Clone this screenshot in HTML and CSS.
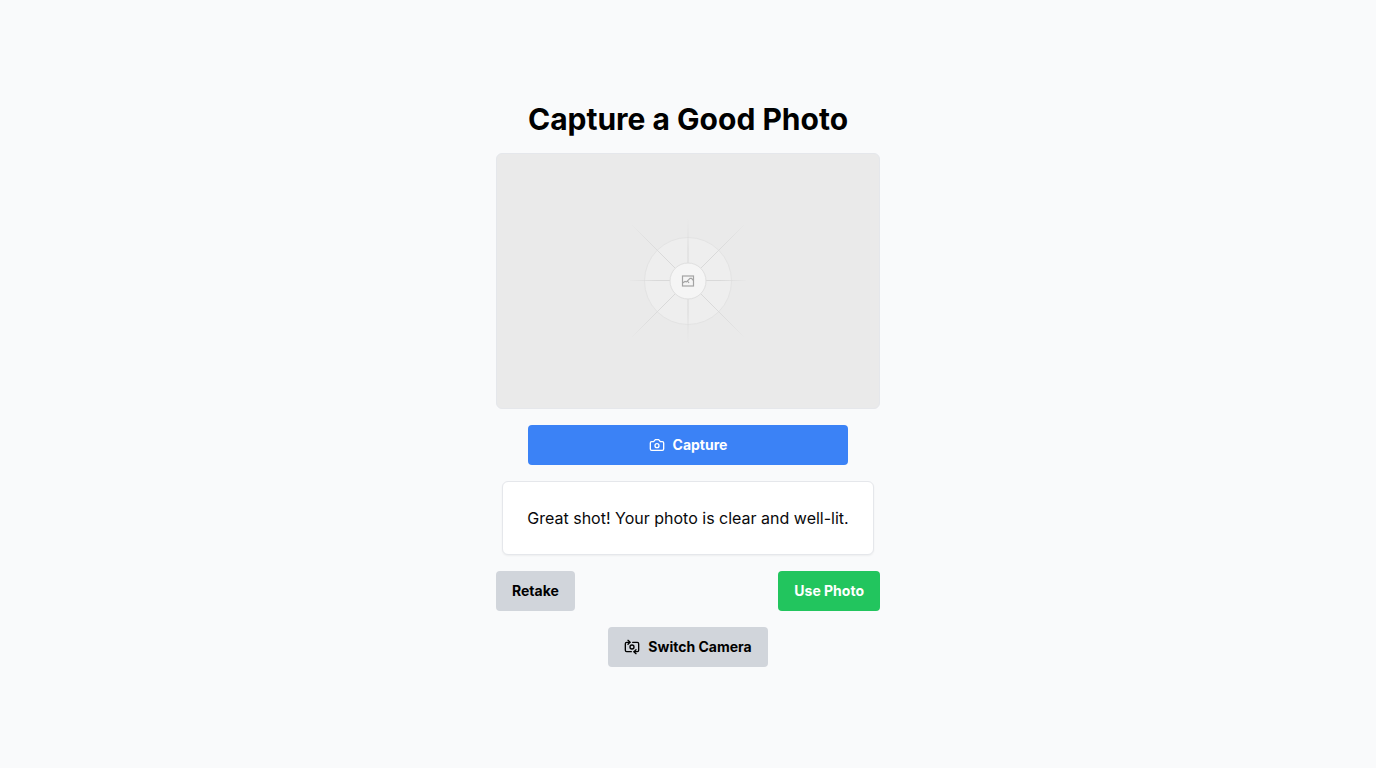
FILE: index.html
```
<!DOCTYPE html>
<html lang="en">
<head>
<meta charset="utf-8">
<meta name="viewport" content="width=device-width, initial-scale=1">
<title>Capture a Good Photo</title>
<link rel="stylesheet" href="styles.css">
</head>
<body>
<main class="page">
  <h1 class="title">Capture a Good Photo</h1>
  <div class="preview">
    <svg class="placeholder" viewBox="-64 -64 128 128" role="img" aria-label="Camera preview">
      <defs>
        <radialGradient id="ray" gradientUnits="userSpaceOnUse" cx="0" cy="0" r="82">
          <stop offset="0.4" stop-color="#d9d9d9"/>
          <stop offset="0.7" stop-color="#dedede"/>
          <stop offset="1" stop-color="#dedede" stop-opacity="0"/>
        </radialGradient>
        <radialGradient id="axis" gradientUnits="userSpaceOnUse" cx="0" cy="0" r="64">
          <stop offset="0.5" stop-color="#d9d9d9"/>
          <stop offset="1" stop-color="#dedede" stop-opacity="0"/>
        </radialGradient>
      </defs>
      <circle r="43.5" fill="#eeeeee" stroke="#e3e3e3"/>
      <path d="M-58-.5H58M0-62V62" stroke="url(#axis)"/>
      <path d="M-56-56 56 56M56-56-56 56" stroke="url(#ray)"/>
      <circle r="18" fill="#f5f5f5" stroke="#dfdfdf"/>
      <g fill="none" stroke="#a3a3a3" stroke-width="1.200">
        <rect x="-5.500" y="-5" width="11" height="10"/>
        <path d="M-5.500 2-3 .5-1.500 .8 2-2.700H3.500L5.500-.5M-.5 0 1 2"/>
      </g>
    </svg>
  </div>
  <button class="button capture" type="button">
    <svg class="icon" viewBox="0 0 24 24" aria-hidden="true">
      <path d="M14.500 4h-5L7 7H4a2 2 0 0 0-2 2v9a2 2 0 0 0 2 2h16a2 2 0 0 0 2-2V9a2 2 0 0 0-2-2h-3l-2.500-3z"/>
      <circle cx="12" cy="13" r="3"/>
    </svg>
    Capture
  </button>
  <p class="feedback">Great shot! Your photo is clear and well-lit.</p>
  <div class="actions">
    <button class="button neutral" type="button">Retake</button>
    <button class="button accept" type="button">Use Photo</button>
  </div>
  <button class="button neutral" type="button">
    <svg class="icon" viewBox="0 0 24 24" aria-hidden="true">
      <path d="M11 19H4a2 2 0 0 1-2-2V7a2 2 0 0 1 2-2h5"/>
      <path d="M13 5h7a2 2 0 0 1 2 2v10a2 2 0 0 1-2 2h-5"/>
      <circle cx="12" cy="12" r="3"/>
      <path d="m18 22-3-3 3-3"/>
      <path d="m6 2 3 3-3 3"/>
    </svg>
    Switch Camera
  </button>
</main>
</body>
</html>
```
FILE: styles.css
```
* {
  box-sizing: border-box;
}

body {
  margin: 0;
  background: #f9fafb;
  color: #000;
  font-family: Inter, "Liberation Sans", sans-serif;
}

.page {
  display: flex;
  flex-direction: column;
  align-items: center;
  justify-content: center;
  gap: 16px;
  min-height: 100vh;
}

.title {
  margin: 0;
  font-size: 30px;
  line-height: 36px;
  font-weight: 700;
}

.preview {
  display: grid;
  place-items: center;
  width: 100%;
  max-width: 384px;
  aspect-ratio: 3 / 2;
  border: 1px solid #e5e7eb;
  border-radius: 6px;
  background: #eaeaea;
}

.placeholder {
  width: 128px;
  height: 128px;
}

.button {
  display: inline-flex;
  align-items: center;
  justify-content: center;
  gap: 8px;
  padding: 10px 16px;
  border: 0;
  border-radius: 4px;
  font: 700 14px/20px Inter, "Liberation Sans", sans-serif;
  color: #000;
  cursor: pointer;
}

.capture {
  width: 100%;
  max-width: 320px;
  background: #3b82f6;
  color: #fff;
}

.neutral {
  background: #d1d5db;
}

.accept {
  background: #22c55e;
  color: #fff;
}

.icon {
  width: 16px;
  height: 16px;
  fill: none;
  stroke: currentColor;
  stroke-width: 2;
  stroke-linecap: round;
  stroke-linejoin: round;
}

.feedback {
  margin: 0;
  padding: 24px;
  border: 1px solid #e5e7eb;
  border-radius: 6px;
  background: #fff;
  box-shadow: 0 1px 2px rgba(0, 0, 0, 0.05);
  color: #09090b;
  font-size: 16px;
  line-height: 24px;
}

.actions {
  display: flex;
  justify-content: space-between;
  width: 100%;
  max-width: 384px;
}
```
